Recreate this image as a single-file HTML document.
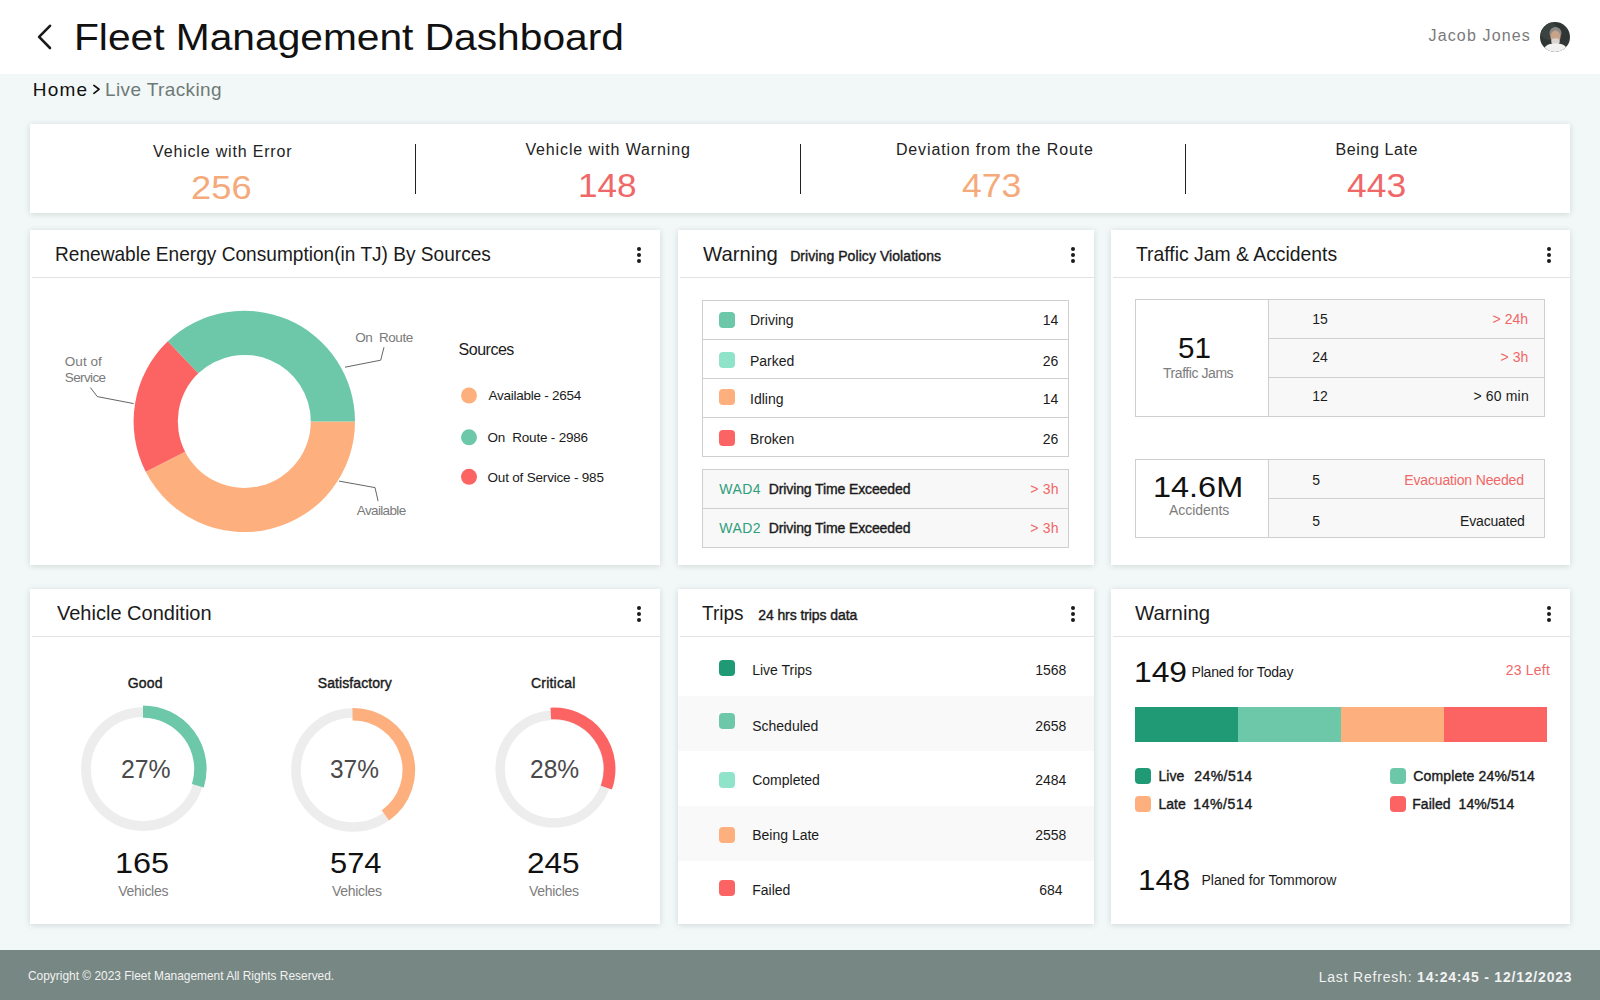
<!DOCTYPE html>
<html><head><meta charset="utf-8"><style>
html,body{margin:0;padding:0;}
body{width:1600px;height:1000px;position:relative;overflow:hidden;background:#f2f8f7;font-family:"Liberation Sans",sans-serif;}
.t{position:absolute;white-space:pre;line-height:1;}
.card{position:absolute;background:#fff;box-shadow:0 1px 6px rgba(40,55,50,0.17);}
.hl{position:absolute;height:1px;background:#e3e3e3;}
.dots{position:absolute;width:4px;height:16px;}
.dots i{position:absolute;left:0;width:4px;height:4px;border-radius:50%;background:#1b1b1b;}
.sq{position:absolute;width:16px;height:16px;border-radius:4px;}
</style></head><body>
<div style="position:absolute;left:0;top:0;width:1600px;height:74px;background:#fff"></div>
<svg style="position:absolute;left:0;top:0" width="80" height="74"><polyline points="50,25.8 39.1,36.9 50,48" fill="none" stroke="#1a1a1a" stroke-width="2.6" stroke-linecap="round" stroke-linejoin="round"/></svg>
<svg style="position:absolute;left:0;top:74px" width="120" height="40"><polyline points="93.9,11.4 99,15.3 93.9,19.3" fill="none" stroke="#111" stroke-width="1.7" stroke-linecap="round" stroke-linejoin="round"/></svg>
<svg style="position:absolute;left:1540px;top:22px" width="30" height="30" viewBox="0 0 30 30"><defs><clipPath id="av"><circle cx="15" cy="15" r="15"/></clipPath></defs><g clip-path="url(#av)"><rect width="30" height="30" fill="#2f3634"/><circle cx="9" cy="9" r="9" fill="#3b4341"/><ellipse cx="15.5" cy="11" rx="6" ry="6" fill="#8d8b87"/><ellipse cx="15.5" cy="15" rx="5" ry="6.5" fill="#c9a28a"/><ellipse cx="15.5" cy="19.5" rx="4.2" ry="3.2" fill="#d9d4cf"/><path d="M2,31 C4,23 9,21.5 15.5,21.5 C22,21.5 27,23 29,31 Z" fill="#f1f1f0"/></g></svg>
<div class="card" style="left:30px;top:124px;width:1540px;height:89px"></div>
<div style="position:absolute;left:414.5px;top:144px;width:1.5px;height:50px;background:#222"></div>
<div style="position:absolute;left:799.5px;top:144px;width:1.5px;height:50px;background:#222"></div>
<div style="position:absolute;left:1184.5px;top:144px;width:1.5px;height:50px;background:#222"></div>
<div class="card" style="left:30px;top:230px;width:630px;height:335px"></div>
<div class="hl" style="left:32px;top:277px;width:628px"></div>
<div class="dots" style="left:637px;top:247px"><i style="top:0"></i><i style="top:6px"></i><i style="top:12px"></i></div>
<div class="card" style="left:678px;top:230px;width:416px;height:335px"></div>
<div class="hl" style="left:680px;top:277px;width:414px"></div>
<div class="dots" style="left:1071px;top:247px"><i style="top:0"></i><i style="top:6px"></i><i style="top:12px"></i></div>
<div class="card" style="left:1111px;top:230px;width:459px;height:335px"></div>
<div class="hl" style="left:1113px;top:277px;width:457px"></div>
<div class="dots" style="left:1547px;top:247px"><i style="top:0"></i><i style="top:6px"></i><i style="top:12px"></i></div>
<div class="card" style="left:30px;top:589px;width:630px;height:335px"></div>
<div class="hl" style="left:32px;top:636px;width:628px"></div>
<div class="dots" style="left:637px;top:606px"><i style="top:0"></i><i style="top:6px"></i><i style="top:12px"></i></div>
<div class="card" style="left:678px;top:589px;width:416px;height:335px"></div>
<div class="hl" style="left:680px;top:636px;width:414px"></div>
<div class="dots" style="left:1071px;top:606px"><i style="top:0"></i><i style="top:6px"></i><i style="top:12px"></i></div>
<div class="card" style="left:1111px;top:589px;width:459px;height:335px"></div>
<div class="hl" style="left:1113px;top:636px;width:457px"></div>
<div class="dots" style="left:1547px;top:606px"><i style="top:0"></i><i style="top:6px"></i><i style="top:12px"></i></div>
<svg style="position:absolute;left:0;top:0" width="660" height="565"><path d="M355.00,421.40 A110.7,110.7 0 0 1 145.75,471.83 L185.10,451.69 A66.5,66.5 0 0 0 310.80,421.40 Z" fill="#fdb07d"/><path d="M145.75,471.83 A110.7,110.7 0 0 1 167.82,341.37 L198.36,373.32 A66.5,66.5 0 0 0 185.10,451.69 Z" fill="#fc6464"/><path d="M167.82,341.37 A110.7,110.7 0 0 1 355.00,421.40 L310.80,421.40 A66.5,66.5 0 0 0 198.36,373.32 Z" fill="#6cc8a8"/><polyline points="345,367.2 380.7,360.2 384,347.2" fill="none" stroke="#666" stroke-width="1"/><polyline points="90.3,387.5 97.3,396.6 133.7,403.6" fill="none" stroke="#666" stroke-width="1"/><polyline points="339.1,481.1 375,487.6 378.1,501.1" fill="none" stroke="#666" stroke-width="1"/><circle cx="469" cy="395.5" r="8" fill="#fdb07d"/><circle cx="469" cy="437.3" r="8" fill="#6cc8a8"/><circle cx="469" cy="476.8" r="8" fill="#fc6464"/></svg>
<div style="position:absolute;left:702px;top:300px;width:365px;height:155px;border:1px solid #cfcfcf"></div>
<div style="position:absolute;left:703px;top:339.0px;width:365px;height:1px;background:#cfcfcf"></div>
<div style="position:absolute;left:703px;top:377.9px;width:365px;height:1px;background:#cfcfcf"></div>
<div style="position:absolute;left:703px;top:416.8px;width:365px;height:1px;background:#cfcfcf"></div>
<div class="sq" style="left:719px;top:312px;background:#6cc8a8"></div>
<div class="sq" style="left:719px;top:351.7px;background:#8fe3c8"></div>
<div class="sq" style="left:719px;top:389px;background:#fdb07d"></div>
<div class="sq" style="left:719px;top:430px;background:#fc6464"></div>
<div style="position:absolute;left:702px;top:469px;width:365px;height:77px;border:1px solid #cfcfcf;background:#f8f8f8"></div>
<div style="position:absolute;left:703px;top:508.3px;width:365px;height:1px;background:#cfcfcf"></div>
<div style="position:absolute;left:1268px;top:299px;width:277px;height:118px;background:#f8f8f8"></div>
<div style="position:absolute;left:1135px;top:299px;width:408px;height:116px;border:1px solid #cfcfcf"></div>
<div style="position:absolute;left:1268px;top:299px;width:1px;height:118px;background:#cfcfcf"></div>
<div style="position:absolute;left:1268px;top:337.5px;width:276px;height:1px;background:#cfcfcf"></div>
<div style="position:absolute;left:1268px;top:376.8px;width:276px;height:1px;background:#cfcfcf"></div>
<div style="position:absolute;left:1268px;top:459px;width:277px;height:79px;background:#f8f8f8"></div>
<div style="position:absolute;left:1135px;top:459px;width:408px;height:77px;border:1px solid #cfcfcf"></div>
<div style="position:absolute;left:1268px;top:459px;width:1px;height:79px;background:#cfcfcf"></div>
<div style="position:absolute;left:1268px;top:498px;width:276px;height:1px;background:#cfcfcf"></div>
<svg style="position:absolute;left:68.19999999999999px;top:693.9px" width="150" height="150"><circle cx="75" cy="75" r="57" fill="none" stroke="#ededed" stroke-width="9.75"/><path d="M75.00,17.60 A57.4,57.4 0 0 1 129.89,91.78" fill="none" stroke="#6cc8a8" stroke-width="12.4"/></svg>
<svg style="position:absolute;left:278.0px;top:694.6px" width="150" height="150"><circle cx="75" cy="75" r="57" fill="none" stroke="#ededed" stroke-width="9.6"/><path d="M74.51,19.20 A55.8,55.8 0 0 1 107.40,120.43" fill="none" stroke="#fdb07d" stroke-width="12.6"/></svg>
<svg style="position:absolute;left:479.0px;top:694.4px" width="150" height="150"><circle cx="75" cy="75" r="53.8" fill="none" stroke="#ededed" stroke-width="9.5"/><path d="M71.80,19.49 A55.6,55.6 0 0 1 127.38,93.65" fill="none" stroke="#fc6464" stroke-width="11.7"/></svg>
<div style="position:absolute;left:678px;top:696px;width:416px;height:55px;background:#f9f9f9"></div>
<div style="position:absolute;left:678px;top:806px;width:416px;height:55px;background:#f9f9f9"></div>
<div class="sq" style="left:719px;top:660px;background:#1f9a74"></div>
<div class="sq" style="left:719px;top:713px;background:#6cc8a8"></div>
<div class="sq" style="left:719px;top:772px;background:#8fe3c8"></div>
<div class="sq" style="left:719px;top:826.8px;background:#fdb07d"></div>
<div class="sq" style="left:719px;top:880px;background:#fc6464"></div>
<div style="position:absolute;left:1135px;top:707px;width:103px;height:35px;background:#1f9a74"></div>
<div style="position:absolute;left:1238px;top:707px;width:103px;height:35px;background:#6cc8a8"></div>
<div style="position:absolute;left:1341px;top:707px;width:103px;height:35px;background:#fdb07d"></div>
<div style="position:absolute;left:1444px;top:707px;width:103px;height:35px;background:#fc6464"></div>
<div class="sq" style="left:1135px;top:768px;background:#1f9a74"></div>
<div class="sq" style="left:1135px;top:796px;background:#fdb07d"></div>
<div class="sq" style="left:1390px;top:768px;background:#6cc8a8"></div>
<div class="sq" style="left:1390px;top:796px;background:#fc6464"></div>
<div style="position:absolute;left:0;top:950px;width:1600px;height:50px;background:#778783"></div>
<div class="t" style="left:74.1px;top:19.0px;font-size:37px;color:#111;transform:scaleX(1.1002);transform-origin:0 0;">Fleet Management Dashboard</div>
<div class="t" style="left:1428.5px;top:28.0px;font-size:16px;color:#7a7a7a;letter-spacing:1.15px;">Jacob Jones</div>
<div class="t" style="left:32.8px;top:80.0px;font-size:19px;color:#111;letter-spacing:1.23px;">Home</div>
<div class="t" style="left:105.0px;top:80.0px;font-size:19px;color:#6e7a77;letter-spacing:0.38px;">Live Tracking</div>
<div class="t" style="left:153.1px;top:144.0px;font-size:16px;color:#222;letter-spacing:0.82px;">Vehicle with Error</div>
<div class="t" style="left:191.2px;top:171.0px;font-size:33px;color:#f5aa7b;transform:scaleX(1.1000);transform-origin:0 0;">256</div>
<div class="t" style="left:525.4px;top:142.0px;font-size:16px;color:#222;letter-spacing:0.87px;">Vehicle with Warning</div>
<div class="t" style="left:578.2px;top:169.0px;font-size:33px;color:#f06767;transform:scaleX(1.0635);transform-origin:0 0;">148</div>
<div class="t" style="left:895.9px;top:142.0px;font-size:16px;color:#222;letter-spacing:0.87px;">Deviation from the Route</div>
<div class="t" style="left:962.4px;top:169.0px;font-size:33px;color:#f5aa7b;transform:scaleX(1.0792);transform-origin:0 0;">473</div>
<div class="t" style="left:1335.6px;top:142.0px;font-size:16px;color:#222;letter-spacing:0.60px;">Being Late</div>
<div class="t" style="left:1346.7px;top:169.0px;font-size:33px;color:#f06767;transform:scaleX(1.0736);transform-origin:0 0;">443</div>
<div class="t" style="left:55.4px;top:243.0px;font-size:21px;color:#1b1b1b;transform:scaleX(0.9094);transform-origin:0 0;">Renewable Energy Consumption(in TJ) By Sources</div>
<div class="t" style="left:702.6px;top:243.0px;font-size:21px;color:#1b1b1b;transform:scaleX(0.9658);transform-origin:0 0;">Warning</div>
<div class="t" style="left:790.2px;top:249.0px;font-size:14px;color:#1b1b1b;-webkit-text-stroke:0.4px currentColor;letter-spacing:0.07px;">Driving Policy Violations</div>
<div class="t" style="left:1135.5px;top:243.0px;font-size:21px;color:#1b1b1b;transform:scaleX(0.9216);transform-origin:0 0;">Traffic Jam &amp; Accidents</div>
<div class="t" style="left:56.6px;top:601.8px;font-size:21px;color:#1b1b1b;transform:scaleX(0.9528);transform-origin:0 0;">Vehicle Condition</div>
<div class="t" style="left:702.4px;top:601.8px;font-size:21px;color:#1b1b1b;transform:scaleX(0.9044);transform-origin:0 0;">Trips</div>
<div class="t" style="left:758.2px;top:607.8px;font-size:14px;color:#1b1b1b;-webkit-text-stroke:0.4px currentColor;letter-spacing:-0.08px;">24 hrs trips data</div>
<div class="t" style="left:1135.3px;top:601.8px;font-size:21px;color:#1b1b1b;transform:scaleX(0.9697);transform-origin:0 0;">Warning</div>
<div class="t" style="left:355.3px;top:331.0px;font-size:13.5px;color:#7a7a7a;letter-spacing:-0.45px;">On  Route</div>
<div class="t" style="left:64.8px;top:355.0px;font-size:13.5px;color:#7a7a7a;letter-spacing:0.04px;">Out of</div>
<div class="t" style="left:64.8px;top:371.0px;font-size:13.5px;color:#7a7a7a;letter-spacing:-0.63px;">Service</div>
<div class="t" style="left:356.8px;top:504.0px;font-size:13.5px;color:#7a7a7a;letter-spacing:-0.64px;">Available</div>
<div class="t" style="left:458.6px;top:342.0px;font-size:16px;color:#1b1b1b;letter-spacing:-0.50px;">Sources</div>
<div class="t" style="left:488.5px;top:388.7px;font-size:13.5px;color:#1b1b1b;letter-spacing:-0.26px;">Available - 2654</div>
<div class="t" style="left:487.5px;top:430.5px;font-size:13.5px;color:#1b1b1b;letter-spacing:-0.20px;">On  Route - 2986</div>
<div class="t" style="left:487.5px;top:470.5px;font-size:13.5px;color:#1b1b1b;letter-spacing:-0.19px;">Out of Service - 985</div>
<div class="t" style="left:750.0px;top:313.0px;font-size:14px;color:#1b1b1b;">Driving</div>
<div class="t" style="left:1042.8px;top:313.0px;font-size:14px;color:#1b1b1b;">14</div>
<div class="t" style="left:750.0px;top:354.0px;font-size:14px;color:#1b1b1b;">Parked</div>
<div class="t" style="left:1042.8px;top:354.0px;font-size:14px;color:#1b1b1b;">26</div>
<div class="t" style="left:750.0px;top:392.0px;font-size:14px;color:#1b1b1b;">Idling</div>
<div class="t" style="left:1042.8px;top:392.0px;font-size:14px;color:#1b1b1b;">14</div>
<div class="t" style="left:750.0px;top:432.0px;font-size:14px;color:#1b1b1b;">Broken</div>
<div class="t" style="left:1042.8px;top:432.0px;font-size:14px;color:#1b1b1b;">26</div>
<div class="t" style="left:719.3px;top:482.4px;font-size:14px;color:#2e9e7b;letter-spacing:0.47px;">WAD4</div>
<div class="t" style="left:768.7px;top:482.4px;font-size:14px;color:#1b1b1b;-webkit-text-stroke:0.4px currentColor;letter-spacing:-0.11px;">Driving Time Exceeded</div>
<div class="t" style="left:1030.2px;top:482.4px;font-size:14px;color:#f06767;letter-spacing:0.20px;">&gt; 3h</div>
<div class="t" style="left:719.3px;top:520.6px;font-size:14px;color:#2e9e7b;letter-spacing:0.47px;">WAD2</div>
<div class="t" style="left:768.7px;top:520.6px;font-size:14px;color:#1b1b1b;-webkit-text-stroke:0.4px currentColor;letter-spacing:-0.11px;">Driving Time Exceeded</div>
<div class="t" style="left:1030.2px;top:520.6px;font-size:14px;color:#f06767;letter-spacing:0.20px;">&gt; 3h</div>
<div class="t" style="left:1178.2px;top:333.5px;font-size:29px;color:#111;transform:scaleX(1.0200);transform-origin:0 0;">51</div>
<div class="t" style="left:1163.0px;top:366.4px;font-size:14px;color:#7d7d7d;letter-spacing:-0.44px;">Traffic Jams</div>
<div class="t" style="left:1312.2px;top:312.0px;font-size:14px;color:#1b1b1b;">15</div>
<div class="t" style="left:1492.6px;top:312.0px;font-size:14px;color:#f06767;">&gt; 24h</div>
<div class="t" style="left:1312.2px;top:350.0px;font-size:14px;color:#1b1b1b;">24</div>
<div class="t" style="left:1500.6px;top:350.0px;font-size:14px;color:#f06767;">&gt; 3h</div>
<div class="t" style="left:1312.2px;top:389.0px;font-size:14px;color:#1b1b1b;">12</div>
<div class="t" style="left:1473.4px;top:389.0px;font-size:14px;color:#1b1b1b;letter-spacing:0.17px;">&gt; 60 min</div>
<div class="t" style="left:1152.5px;top:472.5px;font-size:29px;color:#111;transform:scaleX(1.1184);transform-origin:0 0;">14.6M</div>
<div class="t" style="left:1169.0px;top:502.5px;font-size:14px;color:#7d7d7d;letter-spacing:-0.06px;">Accidents</div>
<div class="t" style="left:1312.2px;top:473.0px;font-size:14px;color:#1b1b1b;">5</div>
<div class="t" style="left:1404.3px;top:473.0px;font-size:14px;color:#f06767;letter-spacing:-0.16px;">Evacuation Needed</div>
<div class="t" style="left:1312.2px;top:513.5px;font-size:14px;color:#1b1b1b;">5</div>
<div class="t" style="left:1460.0px;top:513.5px;font-size:14px;color:#1b1b1b;letter-spacing:-0.16px;">Evacuated</div>
<div class="t" style="left:127.7px;top:675.8px;font-size:14px;color:#1b1b1b;-webkit-text-stroke:0.4px currentColor;letter-spacing:0.17px;">Good</div>
<div class="t" style="left:317.8px;top:675.8px;font-size:14px;color:#1b1b1b;-webkit-text-stroke:0.4px currentColor;letter-spacing:0.08px;">Satisfactory</div>
<div class="t" style="left:531.0px;top:675.8px;font-size:14px;color:#1b1b1b;-webkit-text-stroke:0.4px currentColor;letter-spacing:0.21px;">Critical</div>
<div class="t" style="left:120.7px;top:757.2px;font-size:25px;color:#4a4a4a;transform:scaleX(0.9917);transform-origin:0 0;">27%</div>
<div class="t" style="left:330.3px;top:757.2px;font-size:25px;color:#4a4a4a;transform:scaleX(0.9771);transform-origin:0 0;">37%</div>
<div class="t" style="left:530.0px;top:757.0px;font-size:25px;color:#4a4a4a;transform:scaleX(0.9833);transform-origin:0 0;">28%</div>
<div class="t" style="left:114.5px;top:848.6px;font-size:29px;color:#111;transform:scaleX(1.1178);transform-origin:0 0;">165</div>
<div class="t" style="left:329.9px;top:848.6px;font-size:29px;color:#111;transform:scaleX(1.0638);transform-origin:0 0;">574</div>
<div class="t" style="left:526.9px;top:848.6px;font-size:29px;color:#111;transform:scaleX(1.0870);transform-origin:0 0;">245</div>
<div class="t" style="left:118.3px;top:884.0px;font-size:14px;color:#7d7d7d;letter-spacing:-0.29px;">Vehicles</div>
<div class="t" style="left:332.0px;top:884.0px;font-size:14px;color:#7d7d7d;letter-spacing:-0.29px;">Vehicles</div>
<div class="t" style="left:529.0px;top:884.0px;font-size:14px;color:#7d7d7d;letter-spacing:-0.29px;">Vehicles</div>
<div class="t" style="left:752.2px;top:663.4px;font-size:14px;color:#1b1b1b;">Live Trips</div>
<div class="t" style="left:1035.2px;top:663.4px;font-size:14px;color:#1b1b1b;">1568</div>
<div class="t" style="left:752.2px;top:718.5px;font-size:14px;color:#1b1b1b;">Scheduled</div>
<div class="t" style="left:1035.2px;top:718.5px;font-size:14px;color:#1b1b1b;">2658</div>
<div class="t" style="left:752.2px;top:773.3px;font-size:14px;color:#1b1b1b;">Completed</div>
<div class="t" style="left:1035.2px;top:773.3px;font-size:14px;color:#1b1b1b;">2484</div>
<div class="t" style="left:752.2px;top:828.4px;font-size:14px;color:#1b1b1b;">Being Late</div>
<div class="t" style="left:1035.2px;top:828.4px;font-size:14px;color:#1b1b1b;">2558</div>
<div class="t" style="left:752.2px;top:883.1px;font-size:14px;color:#1b1b1b;">Failed</div>
<div class="t" style="left:1039.2px;top:883.1px;font-size:14px;color:#1b1b1b;">684</div>
<div class="t" style="left:1133.8px;top:658.0px;font-size:29px;color:#111;transform:scaleX(1.0956);transform-origin:0 0;">149</div>
<div class="t" style="left:1191.5px;top:664.5px;font-size:14px;color:#1b1b1b;letter-spacing:-0.19px;">Planed for Today</div>
<div class="t" style="left:1505.8px;top:663.4px;font-size:14px;color:#f06767;letter-spacing:0.20px;">23 Left</div>
<div class="t" style="left:1158.5px;top:769.0px;font-size:14px;color:#1b1b1b;-webkit-text-stroke:0.4px currentColor;">Live</div>
<div class="t" style="left:1194.3px;top:769.0px;font-size:14px;color:#1b1b1b;-webkit-text-stroke:0.4px currentColor;letter-spacing:0.43px;">24%/514</div>
<div class="t" style="left:1158.5px;top:797.0px;font-size:14px;color:#1b1b1b;-webkit-text-stroke:0.4px currentColor;">Late</div>
<div class="t" style="left:1193.3px;top:797.0px;font-size:14px;color:#1b1b1b;-webkit-text-stroke:0.4px currentColor;letter-spacing:0.60px;">14%/514</div>
<div class="t" style="left:1413.2px;top:769.0px;font-size:14px;color:#1b1b1b;-webkit-text-stroke:0.4px currentColor;letter-spacing:0.17px;">Complete 24%/514</div>
<div class="t" style="left:1412.2px;top:797.0px;font-size:14px;color:#1b1b1b;-webkit-text-stroke:0.4px currentColor;letter-spacing:0.06px;">Failed  14%/514</div>
<div class="t" style="left:1138.0px;top:865.6px;font-size:29px;color:#111;transform:scaleX(1.0778);transform-origin:0 0;">148</div>
<div class="t" style="left:1201.6px;top:873.3px;font-size:14px;color:#1b1b1b;letter-spacing:-0.06px;">Planed for Tommorow</div>
<div class="t" style="left:28.4px;top:968.5px;font-size:13.5px;color:#f2f2f2;transform:scaleX(0.8826);transform-origin:0 0;">Copyright © 2023 Fleet Management All Rights Reserved.</div>
<div class="t" style="left:1318.7px;top:969.6px;font-size:14px;color:#f2f2f2;letter-spacing:0.80px;">Last Refresh: <b>14:24:45 - 12/12/2023</b></div>
</body></html>
